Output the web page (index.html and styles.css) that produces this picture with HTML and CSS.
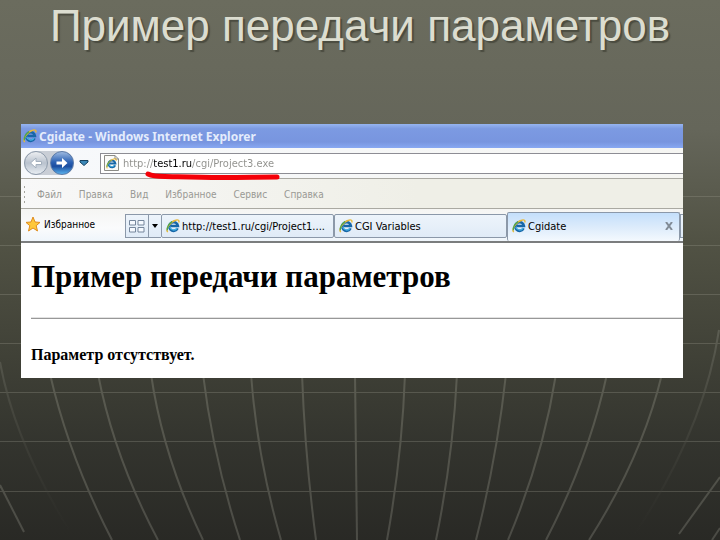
FILE: index.html
```html
<!DOCTYPE html>
<html lang="ru">
<head>
    <meta charset="UTF-8">
    <meta name="viewport" content="width=device-width, initial-scale=1.0">
    <title>Пример передачи параметров</title>
    <link rel="stylesheet" href="styles.css">
</head>
<body>
    <!-- Shared icon -->
    <svg class="sprite" aria-hidden="true">
        <symbol id="ie" viewBox="0 0 16 16">
            <path d="M13.2 10.600A5 5 0 1 1 13.600 8H5.400" fill="none" stroke="#1767a8" stroke-width="3"/>
            <path d="M12.600 10.400A4.600 4.600 0 0 1 4.200 9" fill="none" stroke="#45b4e6" stroke-width="1.400"/>
            <path d="M2 15C-1 12 5 3 11 1.400C14 .4 15.500 1.500 14.500 4" fill="none" stroke="#e9b93a" stroke-width="1.600"/>
            <path d="M1.500 13C1 9 4 5 7 3" fill="none" stroke="#4fa650" stroke-width="1.400"/>
        </symbol>
    </svg>

    <main class="slide">
        <svg class="grid" viewBox="0 0 720 540" preserveAspectRatio="none" aria-hidden="true">
            <defs>
                <linearGradient id="fade" gradientUnits="userSpaceOnUse" x1="0" y1="180" x2="0" y2="540">
                    <stop offset="0" stop-color="#75766a" stop-opacity="0"/>
                    <stop offset=".5" stop-color="#5c5d52"/>
                    <stop offset="1" stop-color="#4b4b45"/>
                </linearGradient>
                <linearGradient id="fade-out" gradientUnits="userSpaceOnUse" x1="0" y1="330" x2="0" y2="535">
                    <stop offset="0" stop-color="#5c5d52"/>
                    <stop offset="1" stop-color="#3b3b36" stop-opacity="0"/>
                </linearGradient>
            </defs>
            <g class="rows">
                <path d="M0 196.500H720"/>
                <path d="M0 245.500H720"/>
                <path d="M0 294.500H720"/>
                <path d="M0 343.500H720"/>
                <path d="M0 392.500H720"/>
                <path d="M0 441.500H720"/>
                <path d="M0 491.500H720"/>
            </g>
            <g class="columns">
                <path d="M50 374Q69 457 112 540"/>
                <path d="M98 374Q114 457 158 540"/>
                <path d="M151 374Q163 457 203 540"/>
                <path d="M203 374Q213 457 240 540"/>
                <path d="M251 374Q257 457 281 540"/>
                <path d="M302 374Q305 457 316 540"/>
                <path d="M355 374L357 540"/>
                <path d="M405 374Q402 457 387 540"/>
                <path d="M457 374Q453 457 436 540"/>
                <path d="M506 374Q497 457 476 540"/>
                <path d="M556 374Q543 457 508 540"/>
                <path d="M607 374Q589 457 546 540"/>
                <path d="M662 374Q642 457 589 540"/>
                <path d="M0 485L24 532"/>
                <path d="M720 477L679 534"/>
                <path d="M720 528L712 540"/>
            </g>
            <g class="columns columns-faded">
                <path d="M0 362Q14 440 69 530"/>
                <path d="M719 330Q704 430 633 537"/>
            </g>
        </svg>

        <h1 class="slide-title">Пример передачи параметров</h1>

        <section class="browser">
            <header class="titlebar">
                <svg class="icon"><use href="#ie"/></svg>
                <span>Cgidate - Windows Internet Explorer</span>
            </header>

            <div class="navbar">
                <div class="nav-buttons">
                    <button class="nav-button back" aria-label="Назад">
                        <svg viewBox="0 0 16 16"><path d="M13.500 6.500H8V3L2.500 8L8 13V9.500H13.500Z"/></svg>
                    </button>
                    <button class="nav-button forward" aria-label="Вперёд">
                        <svg viewBox="0 0 16 16"><path d="M2.500 6.500H8V3L13.500 8L8 13V9.500H2.500Z"/></svg>
                    </button>
                </div>
                <button class="history" aria-label="Последние страницы">
                    <svg viewBox="0 0 10 6"><path d="M1 .5H9V2L5 5.500L1 2Z" fill="#3c88b8" stroke="#15415f"/></svg>
                </button>
                <div class="address">
                    <svg class="page-icon" viewBox="0 0 17 18">
                        <path d="M1.500 1.500H12L15.500 5V16.500H1.500Z" fill="#fafaf8" stroke="#8b8b86"/>
                        <path d="M12 1.500V5H15.500" fill="none" stroke="#8b8b86"/>
                        <use href="#ie" x="3" y="4" width="11" height="11"/>
                    </svg>
                    <input class="url" type="text" aria-label="Адрес" value="http://test1.ru/cgi/Project3.exe">
                    <svg class="marker" viewBox="0 0 136 10" aria-hidden="true">
                        <path d="M3 3C7 5 13 5.500 20 5.500S50 6.500 76 6.500S112 6 132 6"/>
                    </svg>
                </div>
            </div>

            <nav class="menubar">
                <button>Файл</button>
                <button>Правка</button>
                <button>Вид</button>
                <button>Избранное</button>
                <button>Сервис</button>
                <button>Справка</button>
            </nav>

            <div class="tabbar">
                <button class="favorites">
                    <svg viewBox="0 0 16 16"><path d="M8 1L10 6L15 6.400L11.200 9.700L12.500 15L8 12L3.500 15L4.800 9.700L1 6.400L6 6Z" fill="#ffc83a" stroke="#e08c1c"/></svg>
                    <span>Избранное</span>
                </button>
                <button class="quick-tabs" aria-label="Быстрые вкладки">
                    <svg viewBox="0 0 16 13"><path d="M.5 .5H6.500V5H.5ZM9 .5H15V5H9ZM.5 7.500H6.500V12H.5ZM9 7.500H15V12H9Z" fill="#f6faff" stroke="#76879c"/></svg>
                </button>
                <button class="tab-list" aria-label="Список вкладок">
                    <svg viewBox="0 0 6 4"><path d="M0 0H6L3 4Z"/></svg>
                </button>
                <button class="tab">
                    <svg class="icon"><use href="#ie"/></svg>
                    <span>http://test1.ru/cgi/Project1....</span>
                </button>
                <button class="tab">
                    <svg class="icon"><use href="#ie"/></svg>
                    <span>CGI Variables</span>
                </button>
                <button class="tab active">
                    <svg class="icon"><use href="#ie"/></svg>
                    <span>Cgidate</span>
                    <svg class="close" viewBox="0 0 8 8"><path d="M1 0L7 8M7 0L1 8"/></svg>
                </button>
                <button class="new-tab" aria-label="Новая вкладка"></button>
            </div>

            <article class="page">
                <h2>Пример передачи параметров</h2>
                <hr>
                <p>Параметр отсутствует.</p>
            </article>
        </section>
    </main>
</body>
</html>
```

FILE: styles.css
```css
* {
    box-sizing: border-box;
}

body {
    margin: 0;
    font-family: "DejaVu Sans Condensed", "DejaVu Sans", sans-serif;
    font-size: 10px;
}

button {
    padding: 0;
    border: none;
    background: none;
    color: inherit;
    font: inherit;
    cursor: pointer;
}

svg {
    display: block;
    flex-shrink: 0;
}

.sprite {
    display: none;
}

.icon {
    width: 14px;
    height: 14px;
}

.slide {
    position: relative;
    min-height: 100vh;
    padding: 0 37px 0 21px;
    background: linear-gradient(#6b6c5e, #65665a 24%, #515244 45%, #404137 66%, #33342e 82%, #292925);
}

.grid {
    position: absolute;
    inset: 0;
    width: 100%;
    height: 100%;
}

.rows path {
    fill: none;
    stroke: #9a9b90;
    stroke-opacity: 0.3;
}

.columns path {
    fill: none;
    stroke: url(#fade);
    stroke-width: 2;
}

.columns-faded path {
    stroke: url(#fade-out);
}

.slide-title {
    position: relative;
    margin: 0 -16px 0 0;
    padding-bottom: 72px;
    color: #dcddd0;
    font-family: "Liberation Sans", Arial, sans-serif;
    font-size: 44px;
    font-weight: normal;
    line-height: 52px;
    text-align: center;
    text-shadow: 2px 2px 1px #4b4c40;
    white-space: nowrap;
}

.browser {
    position: relative;
    overflow: hidden;
    background: #fff;
}

.titlebar {
    display: flex;
    align-items: center;
    gap: 2px;
    height: 24px;
    padding-left: 2px;
    background: linear-gradient(#96b4f0, #7c9ae2 20%, #7895df 75%, #88a8f2);
    color: #e4ecfc;
    font-family: "Noto Sans", sans-serif;
    font-size: 12px;
    font-weight: bold;
}

.navbar {
    display: flex;
    align-items: center;
    height: 31px;
    border-bottom: 1px solid #aaa9a2;
    background: linear-gradient(90deg, #f7f9fc, #f5f5f2);
}

.nav-buttons {
    display: flex;
    gap: 2px;
    margin-left: 3px;
    border-radius: 12px;
    background: #c9ced6;
}

.nav-button {
    display: flex;
    align-items: center;
    justify-content: center;
    width: 24px;
    height: 24px;
    border: 1px solid #8e9bab;
    border-radius: 50%;
}

.nav-button svg {
    width: 16px;
    height: 16px;
    fill: #fff;
}

.back {
    background: linear-gradient(#eceef1, #b9c2ce 50%, #e8edf2);
}

.back path {
    stroke: #a3afbd;
}

.forward {
    border-color: #5c7caa;
    background: linear-gradient(#9db9e0, #2c62b4 45%, #1b4da0 65%, #58b0ec);
}

.history {
    margin: 0 11px 0 5px;
}

.history svg {
    width: 10px;
    height: 6px;
}

.address {
    position: relative;
    display: flex;
    flex: 1;
    align-items: center;
    gap: 3px;
    height: 21px;
    padding-left: 2px;
    border: 1px solid #8d8d94;
    border-right: none;
    background: #fff;
}

.page-icon {
    width: 17px;
    height: 18px;
}

/* The host part of the address is darker than the rest */
.url {
    flex: 1;
    min-width: 0;
    padding: 0;
    border: none;
    outline: none;
    background: linear-gradient(90deg, #8f8f8b 31px, #000 31px, #000 69px, #8f8f8b 69px);
    -webkit-background-clip: text;
    background-clip: text;
    color: #8f8f8b;
    font: inherit;
    font-size: 11px;
    -webkit-text-fill-color: transparent;
}

.marker {
    position: absolute;
    top: 17px;
    left: 44px;
    width: 136px;
    height: 10px;
}

.marker path {
    fill: none;
    stroke: #f40008;
    stroke-width: 5;
    stroke-linecap: round;
}

.menubar {
    display: flex;
    align-items: center;
    gap: 17px;
    height: 30px;
    padding: 2px 0 0 16px;
    border-bottom: 1px solid #aaa9a2;
    background:
        radial-gradient(circle, #a5a59e 1px, transparent 1px) 2px 6px / 3px 4px no-repeat,
        radial-gradient(circle, #a5a59e 1px, transparent 1px) 2px 11px / 3px 4px no-repeat,
        radial-gradient(circle, #a5a59e 1px, transparent 1px) 2px 16px / 3px 4px no-repeat,
        radial-gradient(circle, #a5a59e 1px, transparent 1px) 2px 21px / 3px 4px no-repeat,
        linear-gradient(90deg, #f8f8f8, #efefe7 60%);
    color: #999994;
}

.tabbar {
    display: flex;
    align-items: flex-start;
    height: 34px;
    padding-top: 3px;
    border-bottom: 2px solid #7b7d7e;
    background: linear-gradient(#f5f5f3, #fafbfc 60%, #eff5fb);
}

.favorites {
    display: flex;
    align-items: center;
    gap: 3px;
    width: 104px;
    height: 24px;
    padding-left: 4px;
}

.favorites svg {
    width: 16px;
    height: 16px;
}

.quick-tabs,
.tab-list,
.tab,
.new-tab {
    display: flex;
    align-items: center;
    height: 24px;
    margin-top: 2px;
    border: 1px solid #8b98a9;
    background: linear-gradient(#edf4fb, #e0ebf7);
}

.quick-tabs,
.tab-list {
    justify-content: center;
    width: 23px;
    border-right: none;
}

.quick-tabs svg {
    width: 16px;
    height: 13px;
}

.tab-list {
    width: 13px;
}

.tab-list svg {
    width: 6px;
    height: 4px;
}

.tab {
    flex: 1;
    gap: 2px;
    min-width: 0;
    padding-left: 4px;
    border-radius: 2px;
    font-size: 11px;
    white-space: nowrap;
}

.tab.active {
    height: 29px;
    margin-top: 0;
    padding-bottom: 2px;
    border-bottom: none;
    background: linear-gradient(#c4dffb, #dcebfb 50%, #f4f9fe);
}

.close {
    width: 8px;
    height: 8px;
    margin: 0 6px 0 auto;
    fill: none;
    stroke: #818b96;
    stroke-width: 2;
}

.new-tab {
    width: 3px;
    border-right: none;
}

.page {
    padding: 16px 0 12px 10px;
    color: #000;
    font-family: "Liberation Serif", "Times New Roman", serif;
    font-weight: bold;
}

.page h2 {
    margin: 0;
    font-size: 31px;
    line-height: 36px;
    white-space: nowrap;
}

.page hr {
    height: 2px;
    margin: 22px 0 25px;
    border: none;
    border-top: 1px solid #e2e2e2;
    border-bottom: 1px solid #989898;
}

.page p {
    margin: 0;
    font-size: 16px;
    line-height: 22px;
}
```
